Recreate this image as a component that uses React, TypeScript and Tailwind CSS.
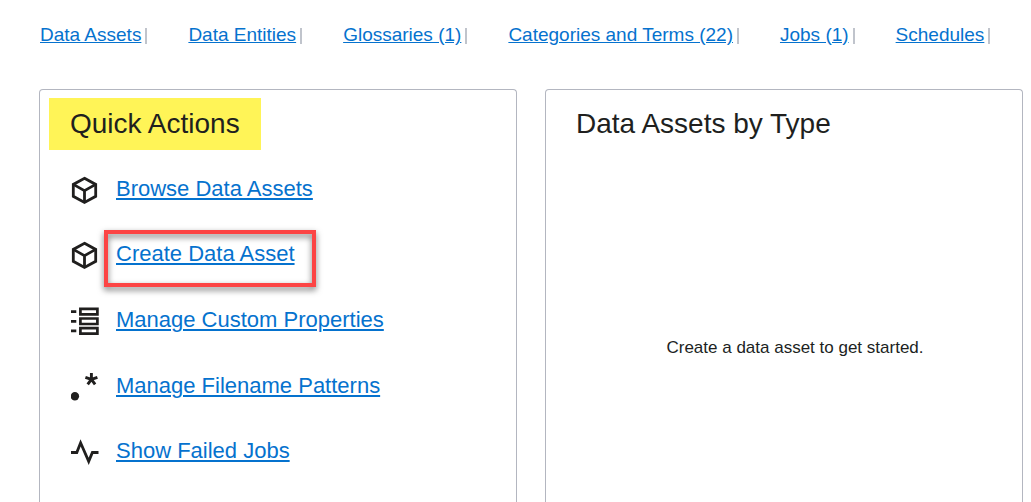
import React from "react";

function CubeIcon() {
  return (
    <svg viewBox="0 0 28 28" className="size-7 shrink-0" fill="none" stroke="#201f1e" strokeWidth="2.8" aria-hidden="true">
      <path d="M13.5 2.3 24.7 8.4V20.3L13.5 26.4 2.3 20.3V8.4Z" />
      <path d="M2.3 8.4 13.5 14.6 24.7 8.4M13.5 14.6V26.4" />
    </svg>
  );
}

function PropertiesIcon() {
  return (
    <svg viewBox="0 0 28 28" className="size-7 shrink-0" fill="none" stroke="#201f1e" strokeWidth="2.7" aria-hidden="true">
      <path d="M0 4.6H5.3M0 14.3H5.3M0 23.9H5.3" />
      <path d="M9.4 1.8H26.4V7.3H9.4ZM9.4 11.5H26.4V17H9.4ZM9.4 21.1H26.4V26.6H9.4Z" />
    </svg>
  );
}

function PatternIcon() {
  return (
    <svg viewBox="0 0 28 28" className="size-7 shrink-0" aria-hidden="true">
      <circle cx="3.9" cy="23.3" r="4.2" fill="#201f1e" />
      <path
        d="M20.4 6.3V0M20.4 6.3 26.4 4.3M20.4 6.3 24.1 11.4M20.4 6.3 16.7 11.4M20.4 6.3 14.4 4.3"
        stroke="#201f1e"
        strokeWidth="2.9"
        fill="none"
      />
    </svg>
  );
}

function PulseIcon() {
  return (
    <svg viewBox="0 0 28 28" className="size-7 shrink-0" fill="none" stroke="#201f1e" strokeWidth="2.8" aria-hidden="true">
      <path d="M0 14.5H5.8L9.6 4.8 17.7 23.4 21.4 14.5H27.5" />
    </svg>
  );
}

const summaryLinks = [
  "Data Assets",
  "Data Entities",
  "Glossaries (1)",
  "Categories and Terms (22)",
  "Jobs (1)",
  "Schedules",
  "Tags",
];

const actions = [
  { label: "Browse Data Assets", Icon: CubeIcon },
  { label: "Create Data Asset", Icon: CubeIcon, highlighted: true },
  { label: "Manage Custom Properties", Icon: PropertiesIcon },
  { label: "Manage Filename Patterns", Icon: PatternIcon },
  { label: "Show Failed Jobs", Icon: PulseIcon },
];

export default function App() {
  return (
    <div className="flex h-screen flex-col overflow-hidden bg-white font-['Liberation_Sans',Arial,sans-serif] text-[#201f1e]">
      <nav aria-label="Catalog summary" className="pt-6 pl-10">
        <ul className="flex gap-[41px]">
          {summaryLinks.map((label) => (
            <li key={label} className="flex shrink-0 items-center gap-1">
              <a href="#" className="text-[19px] leading-[22px] text-[#0572ce] underline">
                {label}
              </a>
              <span className="mt-[2px] h-4 w-[2px] bg-[#c0c4cc]" />
            </li>
          ))}
        </ul>
      </nav>

      <main className="mt-[43px] grid min-h-0 flex-1 grid-cols-2 gap-7 pr-2 pl-[39px]">
        <section className="overflow-hidden rounded-t border border-b-0 border-[#b3b6c0]">
          <h2 className="mt-2 ml-[9px] w-fit bg-[#fff457] px-[21px] text-[28px] leading-[52px]">Quick Actions</h2>
          <ul className="mt-[7px] grid h-[328px] grid-rows-5 pl-[31px]">
            {actions.map(({ label, Icon, highlighted }) => (
              <li key={label} className="flex items-center gap-[17px]">
                <Icon />
                <span className="relative pb-px">
                  <a href="#" className="text-[22px] leading-[26px] text-[#0572ce] underline decoration-2 underline-offset-2">
                    {label}
                  </a>
                  {highlighted && (
                    <span className="pointer-events-none absolute -top-[11px] -right-[21px] -left-3 h-[57px] border-4 border-[#fc4444] drop-shadow-[0_3px_3px_rgba(0,0,0,0.55)]" />
                  )}
                </span>
              </li>
            ))}
          </ul>
        </section>

        <section className="overflow-hidden rounded-t border border-b-0 border-[#b3b6c0]">
          <h2 className="mt-2 px-[30px] text-[28px] leading-[52px]">Data Assets by Type</h2>
          <p className="flex min-h-[396px] items-center justify-center pl-[22px] text-[17px]">
            Create a data asset to get started.
          </p>
        </section>
      </main>
    </div>
  );
}
